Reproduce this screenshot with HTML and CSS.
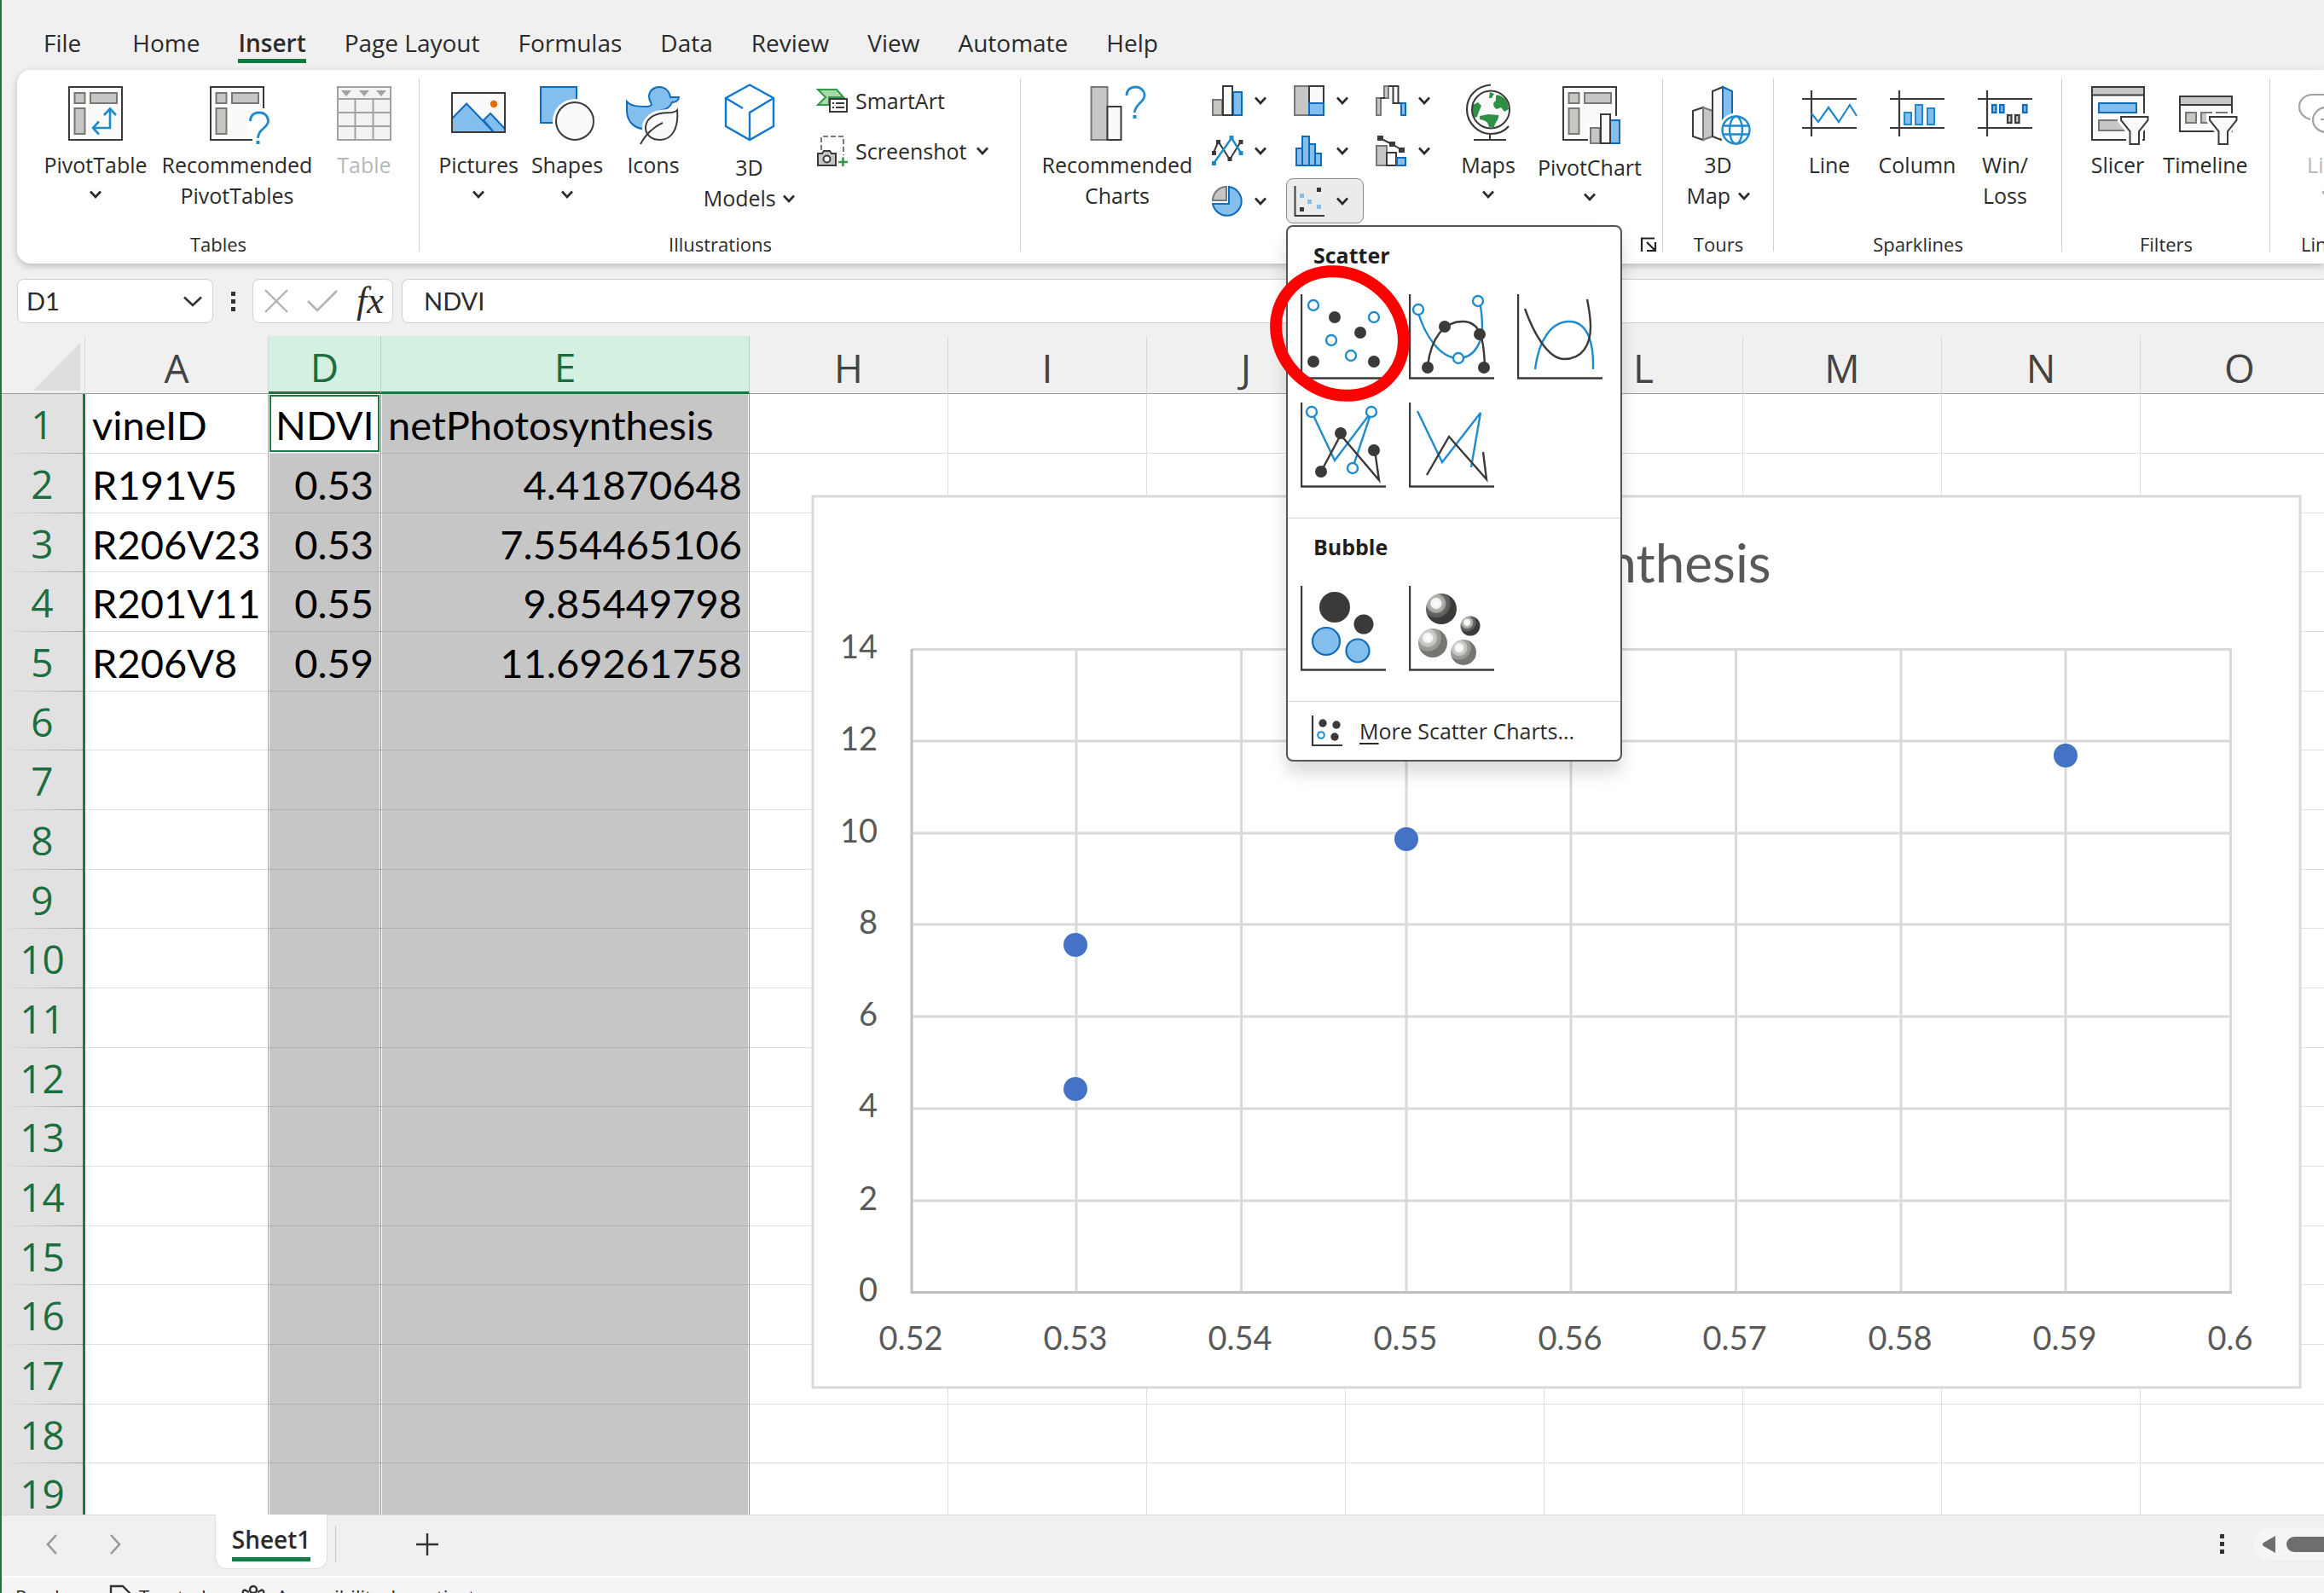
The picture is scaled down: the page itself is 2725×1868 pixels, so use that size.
FILE: index.html
```html
<!DOCTYPE html>
<html lang="en">
<head>
<meta charset="utf-8">
<title>Workbook</title>
<link rel="stylesheet" href="styles.css">
</head>
<body>
<svg class="defs" aria-hidden="true">
  <defs>
    <symbol id="chev" viewBox="0 0 14 10"><path d="M1 1.500 7 8 13 1.500" fill="none" stroke="currentColor" stroke-width="2.600"/></symbol>
    <symbol id="axis" viewBox="0 0 100 100"><path d="M1 0V98.500H100" fill="none" stroke="#3b3a38" stroke-width="2.400"/></symbol>
    <radialGradient id="dark" cx=".33" cy=".32" r=".75">
      <stop offset="0" stop-color="#fff"/><stop offset=".22" stop-color="#f2f2f2"/><stop offset=".26" stop-color="#b5b3b0"/><stop offset=".4" stop-color="#a5a3a0"/><stop offset=".44" stop-color="#696764"/><stop offset=".6" stop-color="#5c5a58"/><stop offset=".64" stop-color="#3b3a38"/>
    </radialGradient>
    <radialGradient id="light" cx=".33" cy=".32" r=".75">
      <stop offset="0" stop-color="#fff"/><stop offset=".22" stop-color="#f2f2f2"/><stop offset=".26" stop-color="#cfcdca"/><stop offset=".4" stop-color="#c4c2bf"/><stop offset=".44" stop-color="#a09e9a"/><stop offset=".6" stop-color="#979591"/><stop offset=".64" stop-color="#777571"/>
    </radialGradient>
  </defs>
</svg>
<div class="app">
  <nav class="tabs" aria-label="Ribbon tabs">
    <button class="tab tab-file">File</button>
    <button class="tab">Home</button>
    <button class="tab tab-on">Insert</button>
    <button class="tab">Page Layout</button>
    <button class="tab">Formulas</button>
    <button class="tab">Data</button>
    <button class="tab">Review</button>
    <button class="tab">View</button>
    <button class="tab">Automate</button>
    <button class="tab">Help</button>
  </nav>

  <section class="ribbon" aria-label="Insert">
    <div class="group g-tables">
      <div class="tools">
        <button class="big w-140">
          <svg class="ico" viewBox="0 0 64 68"><rect x="1" y="4" width="62" height="62" fill="#fafafa" stroke="#3b3a38" stroke-width="2"/><g fill="#c8c6c4" stroke="#7a7874" stroke-width="2"><rect x="7.500" y="11" width="12" height="12"/><rect x="26" y="11" width="31" height="12"/><rect x="7.500" y="29" width="12" height="30"/></g><g fill="none" stroke="#1e8bcd" stroke-width="2.600"><path d="M49 30V52H30M42 37l7-7.500 7 7.500M36 44.500 29 52l7 7.500"/></g></svg>
          <span>PivotTable</span><svg class="chev"><use href="#chev"/></svg>
        </button>
        <button class="big w-192">
          <svg class="ico" viewBox="0 0 64 68"><path d="M50 66H1V4H63V28L45 38V58L50 66Z" fill="#fafafa"/><path d="M50 66H1V4H63V29" fill="none" stroke="#3b3a38" stroke-width="2"/><g fill="#c8c6c4" stroke="#7a7874" stroke-width="2"><rect x="7.500" y="11" width="12" height="12"/><rect x="26" y="11" width="31" height="12"/><rect x="7.500" y="29" width="12" height="30"/></g><path d="M47.500 44C47.500 37 52 34 58 34S68.500 38 68.500 44C68.500 52 56.500 53 56.500 64" fill="none" stroke="#1e8bcd" stroke-width="2.800"/><rect x="54.500" y="67" width="4" height="4" fill="#1e8bcd"/></svg>
          <span>Recommended<br>PivotTables</span>
        </button>
        <button class="big w-106" disabled>
          <svg class="ico" viewBox="0 0 64 68"><rect x="1" y="4" width="62" height="62" fill="#f3f3f3" stroke="#a2a2a2" stroke-width="2"/><path d="M1 18H63M1 34H63M1 50H63M21.500 18V66M42.500 18V66" stroke="#a2a2a2" stroke-width="2"/><path d="M5 8H17L11 15ZM26 8H38L32 15ZM46 8H58L52 15Z" fill="#a2a2a2"/></svg>
          <span>Table</span>
        </button>
      </div>
      <h2 class="gname">Tables</h2>
    </div>

    <div class="group g-illus">
      <div class="tools">
        <button class="big w-102">
          <svg class="ico" viewBox="0 0 64 68"><rect x="1" y="11" width="62" height="46" fill="#fafafa"/><path d="M1 41 18 23.500 50 57H1Z" fill="#83beec" stroke="#0f6cbd" stroke-width="2"/><path d="M38 43 46 35 63 53V57H50Z" fill="#83beec" stroke="#0f6cbd" stroke-width="2"/><circle cx="50" cy="24" r="4.200" fill="#e06c00"/><rect x="1" y="11" width="62" height="46" fill="none" stroke="#3b3a38" stroke-width="2"/></svg>
          <span>Pictures</span><svg class="chev"><use href="#chev"/></svg>
        </button>
        <button class="big w-106">
          <svg class="ico" viewBox="0 0 64 68"><rect x="1" y="4" width="42" height="42" fill="#83beec" stroke="#0f6cbd" stroke-width="2"/><circle cx="41" cy="44" r="26" fill="#fff"/><circle cx="41" cy="44" r="22" fill="#fafafa" stroke="#3b3a38" stroke-width="2"/></svg>
          <span>Shapes</span><svg class="chev"><use href="#chev"/></svg>
        </button>
        <button class="big w-96">
          <svg class="ico" viewBox="0 0 64 68"><path d="M1 21C5 26 12 27 24 27 29 27 31 25 29 22 27 19 27 17 27 15 27 8 33 4 39 4 46 4 51 9 52 16H62C62 20 58 22 54 22 52 27 48 30 43 31 30 35 20 43 21 53 8 53 1 42 1 32Z" fill="#83beec" stroke="#0f6cbd" stroke-width="2"/><path d="M60 31C57 35 50 34 44 34.500 30 36 23 43 23 52 23 60 30 66 40 66 54 66 62 52 60 31Z" fill="#fafafa" stroke="#fff" stroke-width="8"/><path d="M60 31C57 35 50 34 44 34.500 30 36 23 43 23 52 23 60 30 66 40 66 54 66 62 52 60 31Z" fill="#fafafa" stroke="#3b3a38" stroke-width="2"/><path d="M17 71C23 60 30 52 43 46" fill="none" stroke="#3b3a38" stroke-width="2"/></svg>
          <span>Icons</span>
        </button>
        <button class="big w-129">
          <svg class="ico tall" viewBox="0 0 64 71"><path d="M32 1.500 60 17V50L32 66 4 50V17ZM4 17 24 29M60 17 32 34V66" fill="none" stroke="#0f78d4" stroke-width="2.400"/></svg>
          <span>3D<br>Models <svg class="chev in"><use href="#chev"/></svg></span>
        </button>
        <div class="stack">
          <button class="row"><svg class="mini" viewBox="0 0 36 36"><path d="M1 5H23L31 14H14V23H1L10 14Z" fill="#a5dba9" stroke="#2f9a47" stroke-width="2"/><rect x="15" y="16" width="20" height="15" fill="#fafafa" stroke="#3b3a38" stroke-width="2"/><path d="M18 21H20M22 21H32M18 26H20M22 26H32" stroke="#3b3a38" stroke-width="2"/></svg>SmartArt</button>
          <button class="row"><svg class="mini" viewBox="0 0 36 36"><path d="M5 17V1H31V23" fill="none" stroke="#7a7874" stroke-width="2" stroke-dasharray="6 3"/><path d="M1 21H6L8 18H15L17 21H22V35H1Z" fill="#c8c6c4" stroke="#3b3a38" stroke-width="2"/><circle cx="11.500" cy="27.500" r="4" fill="#fafafa" stroke="#3b3a38" stroke-width="2"/><path d="M25 31H36M30.500 25.500V36" stroke="#2f9a47" stroke-width="2.600"/></svg>Screenshot <svg class="chev in"><use href="#chev"/></svg></button>
        </div>
      </div>
      <h2 class="gname">Illustrations</h2>
    </div>

    <div class="group g-charts">
      <div class="tools">
        <button class="big w-200">
          <svg class="ico" viewBox="0 0 64 68"><rect x="1.500" y="4" width="19" height="62" fill="#c8c6c4" stroke="#7a7874" stroke-width="2"/><rect x="20.500" y="27" width="16" height="39" fill="#fafafa" stroke="#3b3a38" stroke-width="2"/><path d="M43 14C43 7 48 4 53.500 4S64 8 64 14C64 22 52.500 24 52.500 34" fill="none" stroke="#1e8bcd" stroke-width="2.800"/><rect x="50.500" y="37" width="4" height="4" fill="#1e8bcd"/></svg>
          <span>Recommended<br>Charts</span>
        </button>
        <div class="minis">
          <button class="cell" aria-label="Column chart"><svg class="mini" viewBox="0 0 36 36"><rect x="1" y="17" width="11" height="18" fill="#c8c6c4" stroke="#7a7874" stroke-width="2"/><rect x="25" y="8" width="10" height="27" fill="#83beec" stroke="#0f6cbd" stroke-width="2"/><rect x="13" y="1" width="11" height="34" fill="#fafafa" stroke="#3b3a38" stroke-width="2"/></svg><svg class="chev"><use href="#chev"/></svg></button>
          <button class="cell" aria-label="Hierarchy chart"><svg class="mini" viewBox="0 0 36 36"><rect x="1" y="1" width="17" height="34" fill="#c8c6c4" stroke="#7a7874" stroke-width="2"/><rect x="18" y="1" width="17" height="20" fill="#fafafa" stroke="#3b3a38" stroke-width="2"/><rect x="18" y="21" width="17" height="14" fill="#83beec" stroke="#0f6cbd" stroke-width="2"/></svg><svg class="chev"><use href="#chev"/></svg></button>
          <button class="cell" aria-label="Waterfall chart"><svg class="mini" viewBox="0 0 36 36"><g fill="#c8c6c4" stroke="#7a7874" stroke-width="2"><rect x="1" y="15" width="5" height="20"/><rect x="10" y="1" width="5" height="14"/></g><path d="M5 15H11M15 1H21" stroke="#3b3a38" stroke-width="2"/><rect x="20.500" y="1" width="6" height="20" fill="#fafafa" stroke="#3b3a38" stroke-width="2"/><path d="M26 21H31" stroke="#3b3a38" stroke-width="2"/><rect x="30" y="21" width="5" height="14" fill="#83beec" stroke="#0f6cbd" stroke-width="2"/></svg><svg class="chev"><use href="#chev"/></svg></button>
          <button class="cell" aria-label="Line chart"><svg class="mini" viewBox="0 0 36 36"><path d="M2 20 7.500 7 21 28 34 7" fill="none" stroke="#3b3a38" stroke-width="2"/><path d="M2.500 32 23 3 34 20" fill="none" stroke="#1e8bcd" stroke-width="2.400"/><path d="M0 18h5v5H0zM5 5h5v5H5zM18.500 25h5v5h-5zM31.500 5h5v5h-5z" fill="#3b3a38"/><path d="M0 30h5v5H0zM20.500 0h5v5h-5zM31.500 18h5v5h-5z" fill="#1e8bcd"/></svg><svg class="chev"><use href="#chev"/></svg></button>
          <button class="cell" aria-label="Histogram"><svg class="mini" viewBox="0 0 36 36"><g fill="#83beec" stroke="#0f6cbd" stroke-width="2"><rect x="3" y="15" width="7" height="20"/><rect x="10" y="1" width="8" height="34"/><rect x="18" y="10" width="7" height="25"/><rect x="25" y="21" width="7" height="14"/></g></svg><svg class="chev"><use href="#chev"/></svg></button>
          <button class="cell" aria-label="Combo chart"><svg class="mini" viewBox="0 0 36 36"><rect x="1" y="12" width="12" height="23" fill="#c8c6c4" stroke="#7a7874" stroke-width="2"/><rect x="13" y="20" width="11" height="15" fill="#fafafa" stroke="#3b3a38" stroke-width="2"/><rect x="25" y="26" width="10" height="9" fill="#83beec" stroke="#0f6cbd" stroke-width="2"/><path d="M5 3 19 10 31 17" fill="none" stroke="#3b3a38" stroke-width="2"/><path d="M2 0h7v6H2zM16 7h7v6h-7zM27 14h7v6h-7z" fill="#3b3a38"/></svg><svg class="chev"><use href="#chev"/></svg></button>
          <button class="cell" aria-label="Pie chart"><svg class="mini" viewBox="0 0 36 36"><path d="M17 17H1A16 16 0 0 1 17 1Z" fill="#c8c6c4" stroke="#7a7874" stroke-width="2"/><path d="M20 1A17 17 0 1 1 1 21H20Z" fill="#83beec" stroke="#0f6cbd" stroke-width="2"/></svg><svg class="chev"><use href="#chev"/></svg></button>
          <div class="drop">
            <button class="cell cell-on" aria-label="Scatter chart"><svg class="mini" viewBox="0 0 36 36"><path d="M1.500 0V35H36" fill="none" stroke="#3b3a38" stroke-width="2"/><path d="M27 2h5v5h-5zM7 25h5v5H7z" fill="#3b3a38"/><path d="M7 9h5v5H7zM16 16h5v5h-5zM27 22h5v5h-5z" fill="#83beec"/></svg><svg class="chev"><use href="#chev"/></svg></button>
            <div class="menu">
              <section class="msec">
                <h3>Scatter</h3>
                <div class="gallery">
                  <button aria-label="Scatter"><svg viewBox="0 0 100 100"><use href="#axis"/><g fill="#fff" stroke="#1e8bcd" stroke-width="2.400"><circle cx="15" cy="13" r="6"/><circle cx="86" cy="27" r="6"/><circle cx="36" cy="54" r="6"/><circle cx="59" cy="72" r="6"/></g><g fill="#3b3a38"><circle cx="40" cy="27" r="7"/><circle cx="70" cy="45" r="7"/><circle cx="15" cy="79" r="7"/><circle cx="86" cy="79" r="7"/></g></svg></button>
                  <button aria-label="Scatter with smooth lines and markers"><svg viewBox="0 0 100 100"><use href="#axis"/><path d="M11 22C19 48 36 75 58 75 78 75 86 54 86 40 86 28 85 18 83 10" fill="none" stroke="#1e8bcd" stroke-width="2.400"/><path d="M22 84C26 50 42 32 63 32S88 52 89 86" fill="none" stroke="#3b3a38" stroke-width="2.400"/><g fill="#fff" stroke="#1e8bcd" stroke-width="2.400"><circle cx="11" cy="18" r="6"/><circle cx="81" cy="8" r="6"/><circle cx="58" cy="75" r="6"/></g><g fill="#3b3a38"><circle cx="42" cy="38" r="7"/><circle cx="83" cy="47" r="7"/><circle cx="22" cy="86" r="7"/><circle cx="88" cy="86" r="7"/></g></svg></button>
                  <button aria-label="Scatter with smooth lines"><svg viewBox="0 0 100 100"><use href="#axis"/><path d="M21 88C25 54 40 32 61 32S90 56 89 88" fill="none" stroke="#1e8bcd" stroke-width="2.400"/><path d="M9 17C19 45 36 76 55 76 76 76 86 60 86 38 86 26 84 16 82 6" fill="none" stroke="#3b3a38" stroke-width="2.400"/></svg></button>
                  <button aria-label="Scatter with straight lines and markers"><svg viewBox="0 0 100 100"><use href="#axis"/><path d="M13 11 40 68 83 11 61 77" fill="none" stroke="#1e8bcd" stroke-width="2.400"/><path d="M24 81 47 38 92 91 87 56" fill="none" stroke="#3b3a38" stroke-width="2.400"/><g fill="#fff" stroke="#1e8bcd" stroke-width="2.400"><circle cx="13" cy="11" r="6"/><circle cx="83" cy="11" r="6"/><circle cx="61" cy="77" r="6"/></g><g fill="#3b3a38"><circle cx="47" cy="36" r="7"/><circle cx="24" cy="81" r="7"/><circle cx="86" cy="56" r="7"/></g></svg></button>
                  <button aria-label="Scatter with straight lines"><svg viewBox="0 0 100 100"><use href="#axis"/><path d="M10 10 39 70 84 12 73 76" fill="none" stroke="#1e8bcd" stroke-width="2.400"/><path d="M21 85 47 40 91 90 87 58" fill="none" stroke="#3b3a38" stroke-width="2.400"/></svg></button>
                </div>
              </section>
              <section class="msec">
                <h3>Bubble</h3>
                <div class="gallery">
                  <button aria-label="Bubble"><svg viewBox="0 0 100 100"><use href="#axis"/><circle cx="40" cy="25" r="18" fill="#3b3a38"/><circle cx="74" cy="45" r="11.500" fill="#3b3a38"/><g fill="#83beec" stroke="#0f6cbd" stroke-width="2.200"><circle cx="30" cy="65" r="16"/><circle cx="67" cy="76" r="13.500"/></g></svg></button>
                  <button aria-label="3-D Bubble"><svg viewBox="0 0 100 100"><use href="#axis"/><circle cx="38" cy="27" r="18" fill="url(#dark)"/><circle cx="72" cy="47" r="11.500" fill="url(#dark)"/><circle cx="28" cy="67" r="17" fill="url(#light)"/><circle cx="64" cy="78" r="15" fill="url(#light)"/></svg></button>
                </div>
              </section>
              <button class="more"><svg class="mini" viewBox="0 0 36 36"><path d="M1 0V35H36" fill="none" stroke="#3b3a38" stroke-width="2.200"/><g fill="#3b3a38"><circle cx="13" cy="9" r="4.700"/><circle cx="29" cy="11" r="4.700"/><circle cx="27" cy="25" r="4.700"/></g><circle cx="11" cy="23" r="3.800" fill="#fff" stroke="#1e8bcd" stroke-width="2"/></svg><span><u>M</u>ore Scatter Charts...</span></button>
              <svg class="ring" viewBox="0 0 170 170"><ellipse cx="85" cy="85" rx="78" ry="69.500" transform="rotate(38 85 85)" fill="none" stroke="#f00" stroke-width="14"/></svg>
            </div>
          </div>
        </div>
        <button class="big w-90">
          <svg class="ico" viewBox="0 0 64 68"><circle cx="35" cy="30.500" r="22" fill="#fafafa"/><g fill="#2e9044"><path d="M34 10 39 12 36 17H33ZM41 14C46 12 53 18 55 24L56 30 51 33 47 28 42 30C37 27 37 22 41 20ZM14 25 20 22 24 26 21 33 19 39 16 40C13 35 12 30 14 25ZM22 38 32 36 44 37C45 42 40 45 39 51L33 51C32 46 30 43 22 42Z"/></g><circle cx="35" cy="30.500" r="22" fill="none" stroke="#3b3a38" stroke-width="2"/><path d="M35 1.500C18 3 7 15 7 30 7 46 20 59 35 59 44 59 51 56 56 50M34 59V66M15 66H53" fill="none" stroke="#3b3a38" stroke-width="2.200"/></svg>
          <span>Maps</span><svg class="chev"><use href="#chev"/></svg>
        </button>
        <button class="big w-148">
          <svg class="ico tall" viewBox="0 0 64 71"><path d="M30 66H1V4H63V36H42V50H30Z" fill="#fafafa"/><path d="M30 66H1V4H63V38" fill="none" stroke="#3b3a38" stroke-width="2"/><g fill="#c8c6c4" stroke="#7a7874" stroke-width="2"><rect x="7.500" y="11" width="12" height="12"/><rect x="26" y="11" width="31" height="12"/><rect x="7.500" y="29" width="12" height="30"/></g><rect x="33" y="52" width="11" height="18" fill="#c8c6c4" stroke="#7a7874" stroke-width="2"/><rect x="56" y="43" width="11" height="27" fill="#83beec" stroke="#0f6cbd" stroke-width="2"/><rect x="45" y="36" width="11" height="34" fill="#fafafa" stroke="#3b3a38" stroke-width="2"/></svg>
          <span>PivotChart</span><svg class="chev"><use href="#chev"/></svg>
        </button>
      </div>
      <button class="launch" aria-label="Chart options"><svg viewBox="0 0 20 18"><path d="M2 17V1.500H17M8 6 17 15M18 6V16H8" fill="none" stroke="#222" stroke-width="2.200"/></svg></button>
    </div>

    <div class="group g-tours">
      <div class="tools">
        <button class="big w-129">
          <svg class="ico" viewBox="0 0 64 68"><path d="M2 32 14 28V66L2 62Z" fill="#fafafa" stroke="#3b3a38" stroke-width="2"/><path d="M14 28 25 32V62L14 66Z" fill="#c8c6c4" stroke="#7a7874" stroke-width="2"/><path d="M25 62V9L37 4V60L35 66Z" fill="#fafafa" stroke="#3b3a38" stroke-width="2"/><path d="M37 4 48 9V50L37 58Z" fill="#83beec" stroke="#0f6cbd" stroke-width="2"/><circle cx="52.500" cy="54.500" r="20" fill="#fff"/><g fill="#fff" stroke="#1e8bcd" stroke-width="2.400"><circle cx="52.500" cy="54.500" r="16"/><ellipse cx="52.500" cy="54.500" rx="7.500" ry="16"/><path d="M37.500 49.500H67.500M37.500 59.500H67.500"/></g></svg>
          <span>3D<br>Map <svg class="chev in"><use href="#chev"/></svg></span>
        </button>
      </div>
      <h2 class="gname">Tours</h2>
    </div>

    <div class="group g-spark">
      <div class="tools">
        <button class="big w-96"><svg class="ico" viewBox="0 0 64 68"><path d="M11 8V62M0 18H64M0 52H64" stroke="#3b3a38" stroke-width="2.200"/><path d="M11 35 19 45 31 28 43 45 56 25 64 38" fill="none" stroke="#1e8bcd" stroke-width="2.200"/></svg><span>Line</span></button>
        <button class="big w-110"><svg class="ico" viewBox="0 0 64 68"><path d="M11 8V62M0 18H64M0 52H64" stroke="#3b3a38" stroke-width="2.200"/><g fill="#83beec" stroke="#1e8bcd" stroke-width="2"><rect x="17" y="34" width="8" height="14"/><rect x="30" y="25" width="8" height="23"/><rect x="44" y="29" width="8" height="19"/></g></svg><span>Column</span></button>
        <button class="big w-96"><svg class="ico" viewBox="0 0 64 68"><path d="M11 8V62M0 18H64M0 52H64" stroke="#3b3a38" stroke-width="2.200"/><g fill="#83beec" stroke="#0f6cbd" stroke-width="2.200"><rect x="17" y="25" width="4.500" height="9"/><rect x="26" y="25" width="4.500" height="9"/><rect x="53" y="25" width="4.500" height="9"/></g><g fill="#c8c6c4" stroke="#3b3a38" stroke-width="2.200"><rect x="35" y="37" width="4.500" height="9"/><rect x="44" y="37" width="4.500" height="9"/></g></svg><span>Win/<br>Loss</span></button>
      </div>
      <h2 class="gname">Sparklines</h2>
    </div>

    <div class="group g-filters">
      <div class="tools">
        <button class="big w-96"><svg class="ico" viewBox="0 0 64 68"><rect x="2" y="4" width="61" height="62" fill="#fafafa" stroke="#3b3a38" stroke-width="2"/><rect x="2" y="4" width="61" height="9.500" fill="#c8c6c4" stroke="#3b3a38" stroke-width="2"/><rect x="10" y="23" width="44" height="11" fill="#83beec" stroke="#0f6cbd" stroke-width="2"/><rect x="10" y="43" width="40" height="12" fill="#c8c6c4" stroke="#7a7874" stroke-width="2"/><path d="M36 39H68V43L57 56V71H46V56L36 43Z" fill="#fff" stroke="#fff" stroke-width="8"/><path d="M36 39H67.500V43L57 56V71H46.500V56L36 43Z" fill="#fafafa" stroke="#3b3a38" stroke-width="2"/></svg><span>Slicer</span></button>
        <button class="big w-110"><svg class="ico" viewBox="0 0 64 68"><rect x="2" y="15" width="61" height="41" fill="#fafafa" stroke="#3b3a38" stroke-width="2"/><rect x="2" y="15" width="61" height="10" fill="#c8c6c4" stroke="#3b3a38" stroke-width="2"/><g fill="#c8c6c4" stroke="#7a7874" stroke-width="2"><rect x="9" y="34" width="12" height="12"/><rect x="27" y="34" width="12" height="12"/><rect x="45" y="34" width="12" height="12"/></g><path d="M37 39H69V43L58 56V71H47V56L37 43Z" fill="#fff" stroke="#fff" stroke-width="8"/><path d="M37 39H68.500V43L58 56V71H47.500V56L37 43Z" fill="#fafafa" stroke="#3b3a38" stroke-width="2"/></svg><span>Timeline</span></button>
      </div>
      <h2 class="gname">Filters</h2>
    </div>

    <div class="group g-links">
      <div class="tools">
        <button class="big w-96" disabled><svg class="ico" viewBox="0 0 64 68"><path d="M12 42C4 40-1 34-1 27-1 19 6 13 14 13H32C40 13 47 19 47 27" fill="none" stroke="#a2a2a2" stroke-width="2.200"/><path d="M50 57H30C22 57 15 50 15 43 15 35 22 28 30 28H50M24 42H50" fill="none" stroke="#a2a2a2" stroke-width="2.200"/></svg><span>Link</span><svg class="chev"><use href="#chev"/></svg></button>
      </div>
      <h2 class="gname">Links</h2>
    </div>
  </section>

  <div class="fbar">
    <div class="namebox"><input type="text" value="D1" aria-label="Name box"><button aria-label="Open name list"><svg viewBox="0 0 22 13"><path d="M1 1.500 11 11 21 1.500" fill="none" stroke="#333" stroke-width="2.600"/></svg></button></div>
    <span class="dots"><i></i><i></i><i></i></span>
    <div class="fbtns">
      <button aria-label="Cancel"><svg width="28" height="28" viewBox="0 0 28 28"><path d="M1 1 27 27M27 1 1 27" stroke="#b3b3b3" stroke-width="2.400"/></svg></button>
      <button aria-label="Enter"><svg width="36" height="28" viewBox="0 0 36 28"><path d="M1 14 12 25 35 2" fill="none" stroke="#b3b3b3" stroke-width="2.600"/></svg></button>
      <button class="fx" aria-label="Insert function">fx</button>
    </div>
    <input class="formula" type="text" value="NDVI" aria-label="Formula bar">
  </div>

  <main class="sheet">
    <table class="grid">
      <colgroup><col class="c-num"><col class="c-a"><col class="c-d"><col class="c-e"><col class="c-x" span="8"></colgroup>
      <thead><tr><th class="corner"><svg viewBox="0 0 56 56"><path d="M55 0V56H0Z" fill="#dedede"/></svg></th><th>A</th><th class="on">D</th><th class="on">E</th><th>H</th><th>I</th><th>J</th><th>K</th><th>L</th><th>M</th><th>N</th><th>O</th></tr></thead>
      <tbody>
        <tr><th>1</th><td>vineID</td><td class="active">NDVI</td><td class="s">netPhotosynthesis</td><td></td><td></td><td></td><td></td><td></td><td></td><td></td><td></td></tr>
        <tr><th>2</th><td>R191V5</td><td class="s n">0.53</td><td class="s n">4.41870648</td><td></td><td></td><td></td><td></td><td></td><td></td><td></td><td></td></tr>
        <tr><th>3</th><td>R206V23</td><td class="s n">0.53</td><td class="s n">7.554465106</td><td></td><td></td><td></td><td></td><td></td><td></td><td></td><td></td></tr>
        <tr><th>4</th><td>R201V11</td><td class="s n">0.55</td><td class="s n">9.85449798</td><td></td><td></td><td></td><td></td><td></td><td></td><td></td><td></td></tr>
        <tr><th>5</th><td>R206V8</td><td class="s n">0.59</td><td class="s n">11.69261758</td><td></td><td></td><td></td><td></td><td></td><td></td><td></td><td></td></tr>
        <tr><th>6</th><td></td><td class="s"></td><td class="s"></td><td></td><td></td><td></td><td></td><td></td><td></td><td></td><td></td></tr>
        <tr><th>7</th><td></td><td class="s"></td><td class="s"></td><td></td><td></td><td></td><td></td><td></td><td></td><td></td><td></td></tr>
        <tr><th>8</th><td></td><td class="s"></td><td class="s"></td><td></td><td></td><td></td><td></td><td></td><td></td><td></td><td></td></tr>
        <tr><th>9</th><td></td><td class="s"></td><td class="s"></td><td></td><td></td><td></td><td></td><td></td><td></td><td></td><td></td></tr>
        <tr><th>10</th><td></td><td class="s"></td><td class="s"></td><td></td><td></td><td></td><td></td><td></td><td></td><td></td><td></td></tr>
        <tr><th>11</th><td></td><td class="s"></td><td class="s"></td><td></td><td></td><td></td><td></td><td></td><td></td><td></td><td></td></tr>
        <tr><th>12</th><td></td><td class="s"></td><td class="s"></td><td></td><td></td><td></td><td></td><td></td><td></td><td></td><td></td></tr>
        <tr><th>13</th><td></td><td class="s"></td><td class="s"></td><td></td><td></td><td></td><td></td><td></td><td></td><td></td><td></td></tr>
        <tr><th>14</th><td></td><td class="s"></td><td class="s"></td><td></td><td></td><td></td><td></td><td></td><td></td><td></td><td></td></tr>
        <tr><th>15</th><td></td><td class="s"></td><td class="s"></td><td></td><td></td><td></td><td></td><td></td><td></td><td></td><td></td></tr>
        <tr><th>16</th><td></td><td class="s"></td><td class="s"></td><td></td><td></td><td></td><td></td><td></td><td></td><td></td><td></td></tr>
        <tr><th>17</th><td></td><td class="s"></td><td class="s"></td><td></td><td></td><td></td><td></td><td></td><td></td><td></td><td></td></tr>
        <tr><th>18</th><td></td><td class="s"></td><td class="s"></td><td></td><td></td><td></td><td></td><td></td><td></td><td></td><td></td></tr>
        <tr><th>19</th><td></td><td class="s"></td><td class="s"></td><td></td><td></td><td></td><td></td><td></td><td></td><td></td><td></td></tr>
      </tbody>
    </table>

    <svg class="chart" viewBox="0 0 1746 1047" role="img" aria-label="netPhotosynthesis scatter chart">
      <rect x="1" y="1" width="1744" height="1045" fill="#fff" stroke="#d9d9d9" stroke-width="3"/>
      <text class="ctitle" x="873" y="102">netPhotosynthesis</text>
      <g stroke="#d9d9d9" stroke-width="3">
        <path d="M117 180.500H1665M117 288H1665M117 396H1665M117 503H1665M117 611H1665M117 719H1665M117 827H1665"/>
        <path d="M310 180V935M503.500 180V935M697 180V935M890 180V935M1083.500 180V935M1277 180V935M1470 180V935M1663.500 180V935"/>
      </g>
      <path d="M117 180V934.500H1665" fill="none" stroke="#bfbfbf" stroke-width="3"/>
      <g class="ylab"><text x="77" y="191">14</text><text x="77" y="299">12</text><text x="77" y="407">10</text><text x="77" y="514">8</text><text x="77" y="622">6</text><text x="77" y="729">4</text><text x="77" y="838">2</text><text x="77" y="945">0</text></g>
      <g class="xlab"><text x="116" y="1002">0.52</text><text x="309" y="1002">0.53</text><text x="502" y="1002">0.54</text><text x="696" y="1002">0.55</text><text x="889" y="1002">0.56</text><text x="1082" y="1002">0.57</text><text x="1276" y="1002">0.58</text><text x="1469" y="1002">0.59</text><text x="1663" y="1002">0.6</text></g>
      <g fill="#4472c4"><circle cx="309" cy="696" r="14"/><circle cx="309" cy="527" r="14"/><circle cx="697" cy="403" r="14"/><circle cx="1470" cy="305" r="14"/></g>
    </svg>
  </main>

  <footer class="sheetbar">
    <button class="arrow" aria-label="Previous sheet"><svg viewBox="0 0 14 24"><path d="M12 1 2 12 12 23" fill="none" stroke="#999" stroke-width="2.600"/></svg></button>
    <button class="arrow" aria-label="Next sheet"><svg viewBox="0 0 14 24"><path d="M2 1 12 12 2 23" fill="none" stroke="#999" stroke-width="2.600"/></svg></button>
    <button class="stab"><span>Sheet1</span></button>
    <i class="sep"></i>
    <button class="plus" aria-label="New sheet"><svg viewBox="0 0 26 26"><path d="M13 0V26M0 13H26" stroke="#333" stroke-width="2.400"/></svg></button>
    <span class="dots end"><i></i><i></i><i></i></span>
    <div class="scroll"><svg viewBox="0 0 16 22"><path d="M15 1V21L1 13Q-1 11 1 9Z" fill="#6e6e6e"/></svg><i></i></div>
  </footer>
  <div class="status">
    <span class="st-ready">Ready</span>
    <svg class="st-doc" viewBox="0 0 24 26"><path d="M1 26V1H15L23 9V26" fill="none" stroke="#333" stroke-width="2.400"/></svg>
    <span class="st-mid">Trusted</span>
    <svg class="st-acc" viewBox="0 0 28 26"><circle cx="14" cy="5" r="4" fill="none" stroke="#333" stroke-width="2.400"/><path d="M9 8 4 5.500Q1 6 2 10L9 13V24M19 8 24 5.500Q27 6 26 10L19 13V24" fill="none" stroke="#333" stroke-width="2.400"/></svg>
    <span>Accessibility: Investigate</span>
  </div>
</div>
</body>
</html>
```

FILE: styles.css
```css
* { box-sizing: border-box; }

body {
  margin: 0;
  height: 100vh;
  overflow: hidden;
  background: #f0f0f0;
  color: #2b2b2b;
  font: 25px/36px "Open Sans", "Noto Sans", sans-serif;
}

button, input {
  margin: 0;
  padding: 0;
  border: 0;
  background: none;
  color: inherit;
  font: inherit;
}

h2, h3 { margin: 0; }
svg { display: block; overflow: visible; flex: none; }
.defs { position: absolute; width: 0; height: 0; }

/* the status line runs a little past the bottom of the window */
.app {
  display: flex;
  flex-direction: column;
  height: calc(100vh + 22px);
  border-left: 2px solid #107c41;
}

/* ribbon tabs */
.tabs {
  display: flex;
  flex: none;
  gap: 45px;
  height: 82px;
  padding: 30px 0 0 49px;
}
.tab {
  height: 44px;
  border-bottom: 5px solid transparent;
  font-size: 28px;
  line-height: 38px;
}
.tab-file { margin-right: 15px; }
.tab-on {
  border-image: linear-gradient(#107c41, #107c41) 1;
  font-weight: 600;
}

/* ribbon */
.ribbon {
  position: relative;
  z-index: 2;
  display: flex;
  flex: none;
  height: 227px;
  margin-left: 18px;
  border-radius: 16px 0 0 16px;
  background: #fff;
  box-shadow: 0 3px 8px rgba(0, 0, 0, .22);
}
.group {
  position: relative;
  display: flex;
  flex: none;
  flex-direction: column;
  justify-content: space-between;
  padding: 9px 0 8px;
}
.group::after {
  content: "";
  position: absolute;
  top: 10px;
  right: 0;
  bottom: 14px;
  width: 1px;
  background: #d1d1d1;
}
.g-tables { width: 472px; }
.g-illus { width: 705px; }
.g-charts { width: 753px; }
.g-tours { width: 130px; }
.g-spark { width: 338px; }
.g-filters { width: 244px; }
.g-links { width: 180px; }
.tools { display: flex; align-items: flex-start; }
.g-tables .tools { padding-left: 22px; }
.g-illus .tools { padding-left: 18px; }
.g-charts .tools { padding-left: 13px; }
.g-spark .tools, .g-filters .tools { padding-left: 17px; }
.g-links .tools { padding-left: 19px; }
.gname {
  font-size: 22px;
  font-weight: 400;
  line-height: 30px;
  text-align: center;
}
.g-links .gname { padding-left: 36px; text-align: left; }

.big {
  display: flex;
  flex: none;
  flex-direction: column;
  align-items: center;
  padding-top: 7px;
  line-height: 36px;
  white-space: nowrap;
}
.big:disabled { color: #b8b8b8; }
.ico { width: 64px; height: 68px; margin-bottom: 9px; }
.ico.tall { height: 71px; }
.chev { width: 14px; height: 10px; }
.big > .chev { margin-top: 12px; }
.chev.in { display: inline-block; margin-left: 2px; vertical-align: 4px; }
.w-90 { width: 90px; }
.w-96 { width: 96px; }
.w-102 { width: 102px; }
.w-106 { width: 106px; }
.w-110 { width: 110px; }
.w-129 { width: 129px; }
.w-140 { width: 140px; }
.w-148 { width: 148px; }
.w-192 { width: 192px; }
.w-200 { width: 200px; }

.stack { display: flex; flex-direction: column; gap: 6px; padding-left: 15px; }
.row { display: flex; align-items: center; gap: 9px; height: 53px; white-space: nowrap; }
.mini { width: 36px; height: 36px; }
.minis {
  display: grid;
  grid-template-columns: repeat(3, 91px);
  gap: 6px 5px;
  padding: 0 5px 0 2px;
}
.cell {
  display: flex;
  align-items: center;
  gap: 14px;
  width: 91px;
  height: 53px;
  padding-left: 9px;
}
.cell-on {
  padding-left: 8px;
  border: 1px solid #8a8a8a;
  border-radius: 8px;
  background: #ebebeb;
}
.launch { position: absolute; right: 7px; bottom: 13px; }
.launch svg { width: 20px; height: 18px; }

/* scatter gallery menu */
.drop { position: relative; }
.menu {
  position: absolute;
  top: 55px;
  left: 0;
  width: 394px;
  border: 2px solid #555;
  border-radius: 8px;
  background: #fff;
  box-shadow: 0 14px 20px rgba(0, 0, 0, .14);
}
.msec { padding: 15px 15px 35px; border-bottom: 1px solid #d1d1d1; }
.msec h3 {
  padding-left: 15px;
  font-size: 25px;
  font-weight: 700;
  line-height: 36px;
  color: #1f1f1f;
}
.gallery {
  display: grid;
  grid-template-columns: repeat(3, 100px);
  gap: 27px;
  margin-top: 28px;
}
.gallery svg { width: 100px; height: 100px; }
.more {
  display: flex;
  align-items: center;
  gap: 20px;
  width: 100%;
  height: 68px;
  padding-left: 28px;
  white-space: nowrap;
}
.more u { text-underline-offset: 4px; }
.ring {
  position: absolute;
  top: 40px;
  left: -24px;
  width: 170px;
  height: 170px;
  pointer-events: none;
}

/* formula bar */
.fbar {
  display: flex;
  flex: none;
  height: 85px;
  padding: 18px 0 15px 18px;
  font: 29px/36px Lato, sans-serif;
}
.namebox, .fbtns, .formula {
  border: 1px solid #d1d1d1;
  border-radius: 8px;
  background: #fff;
}
.namebox { display: flex; align-items: center; width: 230px; padding: 0 12px 0 10px; }
.namebox input { flex: 1; min-width: 0; }
.namebox svg { width: 22px; height: 13px; }
.dots {
  display: flex;
  flex-direction: column;
  align-items: center;
  justify-content: center;
  gap: 4px;
  width: 46px;
}
.dots i { width: 5px; height: 5px; background: #333; }
.fbtns { display: flex; align-items: center; gap: 22px; width: 165px; padding-left: 13px; }
.fx { font: italic 44px/44px "Liberation Serif", serif; }
.formula { flex: 1; min-width: 0; margin-left: 10px; padding-left: 25px; border-right: 0; border-radius: 8px 0 0 8px; }

/* worksheet */
.sheet { position: relative; flex: 1; min-height: 0; overflow: hidden; }
.grid {
  width: 2741px;
  table-layout: fixed;
  border-collapse: separate;
  border-spacing: 0;
  color: #000;
  font: 47px/50px Lato, sans-serif;
}
.c-num { width: 98px; }
.c-a { width: 215px; }
.c-d { width: 132px; }
.c-e { width: 432px; }
.c-x { width: 233px; }
.grid th {
  padding: 0;
  font: 400 46px/50px "Open Sans", sans-serif;
}
.grid thead th {
  height: 68px;
  padding-top: 7px;
  border-right: 1px solid #d9d9d9;
  border-bottom: 1px solid #9e9e9e;
  background: #f0f0f0;
  color: #444;
}
.grid thead th.on {
  border-bottom: 3px solid #107c41;
  border-right-color: #b5cfc1;
  background: #d3f0e0;
  color: #1c6e3f;
}
.grid thead .corner { padding: 5px 4px 0 0; }
.corner svg { width: 56px; height: 56px; margin-left: auto; }
.grid tbody tr { height: 70px; }
.grid tbody tr:nth-child(3n) { height: 69px; }
.grid tbody th {
  border-right: 3px solid #1c7a47;
  background: linear-gradient(90deg, #e1e1e1, #a6a6a6) bottom / 100% 1px no-repeat #e1e1e1;
  color: #1c6e3f;
}
.grid td {
  padding: 3px 8px 0;
  border-right: 1px solid #dedede;
  border-bottom: 1px solid #dedede;
  background: #fff;
  white-space: nowrap;
}
.grid td:nth-child(2) { border-right-color: #a6a6a6; }
.grid td.s {
  border-right: 1px solid #8f8f8f;
  border-bottom-color: #b0b0b0;
  background: #c6c6c6;
  box-shadow: inset 1px 0 #fff, inset -1px 0 #fff;
}
.grid td.n { text-align: right; }
.grid td.active {
  border-right-color: #8f8f8f;
  box-shadow: inset 0 0 0 1px #fff, inset 0 0 0 3px #1c7a47;
}

.chart { position: absolute; top: 187px; left: 950px; width: 1746px; height: 1047px; }
.chart text { fill: #595959; font-family: Lato, sans-serif; }
.chart .ctitle { font-size: 62px; text-anchor: middle; }
.ylab { font-size: 38px; text-anchor: end; }
.xlab { font-size: 38px; text-anchor: middle; }

/* sheet tabs */
.sheetbar {
  display: flex;
  flex: none;
  align-items: center;
  height: 72px;
  padding: 0 0 4px 22px;
  border-top: 1px solid #d9d9d9;
}
.arrow { display: flex; justify-content: center; width: 74px; }
.arrow svg { width: 14px; height: 24px; }
.stab {
  align-self: flex-start;
  width: 132px;
  height: 64px;
  margin: -1px 0 0 80px;
  padding-top: 2px;
  border: 1px solid #dedede;
  border-top: 0;
  border-radius: 0 0 14px 14px;
  background: #fff;
  font-size: 28px;
  font-weight: 600;
}
.stab span {
  display: inline-block;
  height: 45px;
  border-bottom: 5px solid #107c41;
  line-height: 38px;
}
.sep { width: 1px; height: 43px; margin-left: 9px; background: #c8c8c8; }
.plus { margin-left: 94px; }
.plus svg { width: 26px; height: 26px; }
.end { margin-left: auto; }
.scroll {
  display: flex;
  align-items: center;
  gap: 12px;
  width: 83px;
  height: 39px;
  margin-left: 14px;
  padding-left: 11px;
  border-radius: 20px 0 0 20px;
  background: #f5f5f5;
}
.scroll svg { width: 16px; height: 22px; }
.scroll i { flex: 1; height: 18px; border-radius: 9px 0 0 9px; background: #6e6e6e; }

.status {
  display: flex;
  flex: none;
  height: 42px;
  padding: 9px 0 0 16px;
  border-top: 2px solid #fff;
  background: #f5f5f5;
  font-size: 22px;
  line-height: 26px;
  white-space: nowrap;
}
.st-ready { width: 111px; }
.st-doc { width: 24px; height: 26px; }
.st-mid { width: 130px; padding-left: 10px; }
.st-acc { width: 28px; height: 26px; margin-right: 13px; }
```
